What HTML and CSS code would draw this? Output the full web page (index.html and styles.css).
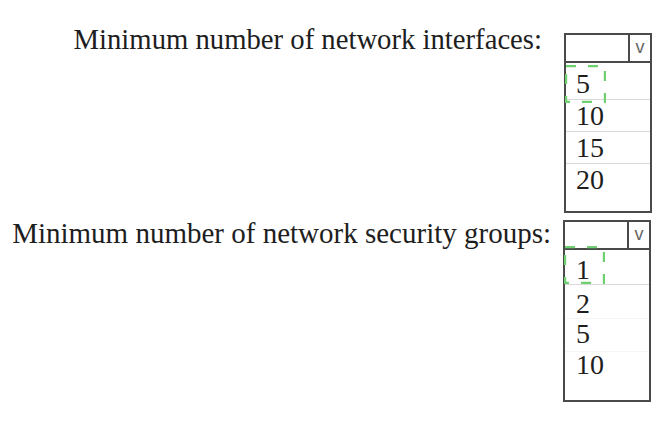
FILE: index.html
```html
<!DOCTYPE html>
<html>
<head>
<meta charset="utf-8">
<link rel="stylesheet" href="styles.css">
</head>
<body>
<div class="page">
  <div class="row row-one">
    <div class="label label-one">Minimum number of network interfaces:</div>
    <div class="select select-one">
      <div class="head"><div class="field"></div><div class="arrow">v</div></div>
      <div class="list">
        <svg class="focus" width="41" height="38" viewBox="0 0 41 38"><rect x="1" y="1" width="39" height="36" fill="none" stroke="#6fd06f" stroke-width="2.4" stroke-dasharray="10 12"/></svg>
        <div class="opt a1 sep">5</div>
        <div class="opt a2 sep">10</div>
        <div class="opt a2 sep">15</div>
        <div class="opt a2">20</div>
      </div>
    </div>
  </div>
  <div class="row row-two">
    <div class="label label-two">Minimum number of network security groups:</div>
    <div class="select select-two">
      <div class="head"><div class="field"></div><div class="arrow">v</div></div>
      <div class="list">
        <svg class="focus focus-two" width="41" height="38" viewBox="0 0 41 38"><rect x="1" y="1" width="39" height="36" fill="none" stroke="#6fd06f" stroke-width="2.4" stroke-dasharray="10 12"/></svg>
        <div class="opt b1 sep">1</div>
        <div class="opt b2 faint">2</div>
        <div class="opt b3 faint">5</div>
        <div class="opt b4">10</div>
      </div>
    </div>
  </div>
</div>
</body>
</html>
```
FILE: styles.css
```css
html, body {
  margin: 0;
  padding: 0;
  background: #fff;
}
body {
  font-family: "Liberation Serif", "Times New Roman", serif;
  color: #1e1e1e;
  width: 664px;
  height: 421px;
  overflow: hidden;
}
.page {
  display: flex;
  flex-direction: column;
  padding-top: 25px;
}
.row {
  display: flex;
  align-items: flex-start;
}
.label {
  line-height: 28px;
  white-space: nowrap;
  text-align: right;
  box-sizing: border-box;
  flex: none;
}
.label-one {
  font-size: 28.7px;
  width: 564px;
  padding-right: 22px;
}
.label-two {
  font-size: 29px;
  width: 563px;
  padding-right: 12px;
  margin-top: 6px;
}
.select {
  width: 88px;
  border: 2px solid #4a4a4a;
  box-sizing: border-box;
  display: flex;
  flex-direction: column;
  flex: none;
}
.select-one { height: 180px; margin-top: 8px; }
.select-two { height: 182px; margin-top: 7px; }
.head {
  display: flex;
  height: 26px;
  border-bottom: 2px solid #4a4a4a;
}
.field { flex: 1; }
.arrow {
  width: 20px;
  border-left: 2px solid #4a4a4a;
  font-family: "Liberation Sans", Arial, sans-serif;
  font-size: 18px;
  color: #666;
  text-align: center;
  line-height: 24px;
}
.list {
  position: relative;
}
.opt {
  line-height: 26px;
  font-size: 28px;
  padding-left: 10px;
}
.sep { border-bottom: 1px solid #dadada; }
.faint { border-bottom: 1px solid #f5f5f5; }
.a1 { padding-top: 8px; padding-bottom: 2px; }
.a2 { padding-top: 3px; padding-bottom: 2px; }
.b1 { padding-top: 7px; padding-bottom: 1px; padding-left: 11px; }
.b2 { padding-top: 6px; padding-bottom: 1px; padding-left: 11px; }
.b3 { padding-top: 2px; padding-bottom: 4px; padding-left: 11px; }
.b4 { padding-top: 0; padding-left: 11px; }
.focus {
  position: absolute;
  left: -1px;
  top: 2px;
}
.focus-two {
  top: -4px;
}
```
